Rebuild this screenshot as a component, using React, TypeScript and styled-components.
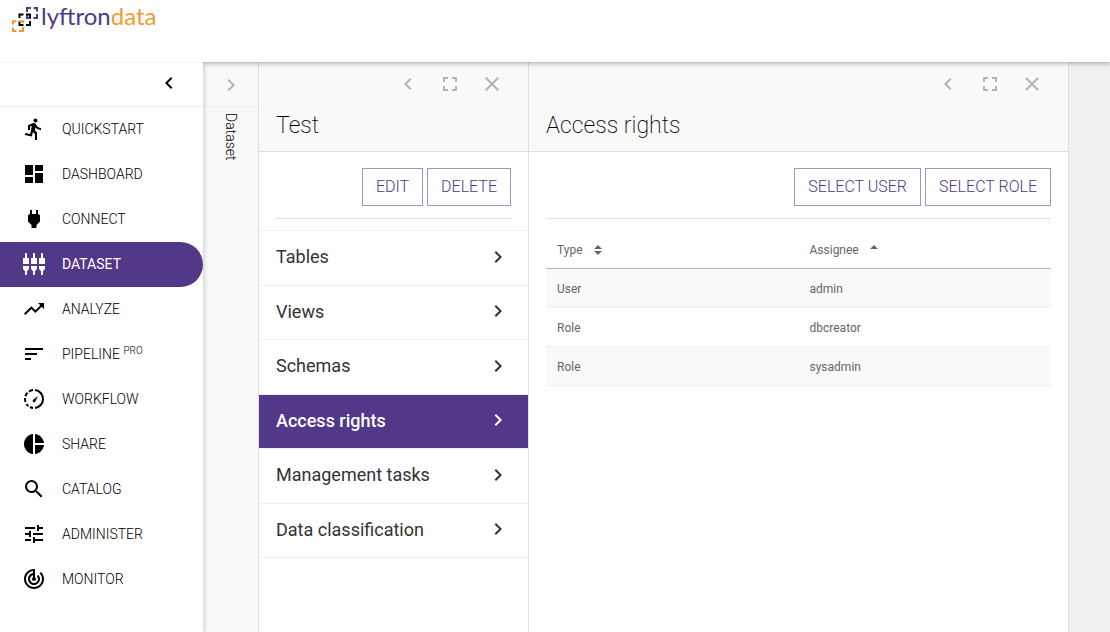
import React from "react";
import styled, { createGlobalStyle } from "styled-components";
import {
  MdDirectionsRun,
  MdDashboard,
  MdPower,
  MdSettingsInputComponent,
  MdTrendingUp,
  MdSort,
  MdPieChart,
  MdSearch,
  MdTune,
  MdTrackChanges,
  MdChevronLeft,
  MdChevronRight,
  MdFullscreen,
  MdClose,
} from "react-icons/md";

const purple = "#513888";

const GlobalStyle = createGlobalStyle`
  *, *::before, *::after { box-sizing: border-box; }
  body {
    margin: 0;
    font-family: Roboto, "Liberation Sans", sans-serif;
    color: #000;
    background: #f0f0f0;
  }
  button { font-family: inherit; cursor: pointer; }
`;

const Page = styled.div`
  display: flex;
  flex-direction: column;
  min-height: 100vh;
`;

const Header = styled.header`
  height: 62px;
  padding: 4px 11px;
  background: #fff;
  position: relative;
  z-index: 1;
  box-shadow: 0 1px 5px rgba(0, 0, 0, 0.35);
`;

const Brand = styled.a`
  display: inline-flex;
  align-items: flex-start;
  gap: 2px;
  font-family: Lato, sans-serif;
  font-size: 24px;
  line-height: 24px;
  color: ${purple};
  text-decoration: none;
`;

const BrandMark = styled.svg`
  width: 28px;
  height: 28px;
  margin-top: 2px;
`;

const BrandAccent = styled.span`
  color: #f29a2e;
`;

const Body = styled.div`
  display: flex;
  flex: 1;
`;

const Sidebar = styled.nav`
  flex: none;
  width: 203px;
  background: #fff;
  position: relative;
  z-index: 2;
  box-shadow: 1px 0 5px rgba(0, 0, 0, 0.2);
  clip-path: inset(0 -8px 0 0);
`;

const SidebarTop = styled.div`
  display: flex;
  justify-content: flex-end;
  align-items: center;
  height: 45px;
  padding: 0 22px 3px 0;
  border-top: 1px solid #f6f6f6;
  border-bottom: 1px solid #f0f0f2;
`;

const IconButton = styled.button<{ $tone?: string }>`
  display: flex;
  padding: 0;
  border: 0;
  background: none;
  color: ${(p) => p.$tone ?? "#b3b3b7"};
  font-size: 24px;
`;

const NavList = styled.ul`
  list-style: none;
  margin: 0;
  padding: 0;
`;

const NavLink = styled.a<{ $active?: boolean }>`
  display: flex;
  align-items: center;
  gap: 16px;
  height: 45px;
  padding: 0 0 2px 22px;
  border-radius: 0 23px 23px 0;
  background: ${(p) => (p.$active ? purple : "transparent")};
  color: ${(p) => (p.$active ? "#fff" : "#000")};
  font-size: 14px;
  font-weight: ${(p) => (p.$active ? 400 : 300)};
  text-decoration: none;

  svg {
    width: 24px;
    height: 24px;
    flex: none;
  }
  sup {
    font-size: 10px;
    line-height: 0;
    vertical-align: 5px;
  }
`;

const CollapsedPanel = styled.aside`
  flex: none;
  display: flex;
  flex-direction: column;
  align-items: center;
  width: 56px;
  background: #f9f9f9;
  border-right: 1px solid #dfdfe0;
`;

const CollapsedTop = styled.div`
  display: flex;
  justify-content: center;
  align-items: center;
  align-self: stretch;
  height: 45px;
  padding-top: 2px;
  border-bottom: 1px solid #f0f0f0;
`;

const VerticalTitle = styled.h2`
  margin: 6px 0 0;
  writing-mode: vertical-rl;
  font-size: 14px;
  font-weight: 300;
  line-height: 16px;
`;

const Panel = styled.section<{ $basis: number }>`
  flex: 0 1 ${(p) => p.$basis}px;
  min-width: 0;
  background: #fff;
  border-right: 1px solid #dfdfe0;
`;

const PanelHeader = styled.div`
  height: 90px;
  padding: 10px 17px 0;
  background: #f9f9f9;
  border-bottom: 1px solid #dfdfe0;
`;

const PanelControls = styled.div`
  display: flex;
  justify-content: flex-end;
  gap: 18px;
  padding-right: 7px;
  font-size: 24px;
`;

const PanelTitle = styled.h1`
  margin: 16px 0 0;
  font-size: 23px;
  font-weight: 200;
  line-height: 28px;
`;

const Toolbar = styled.div`
  display: flex;
  justify-content: flex-end;
  gap: 4px;
  margin: 0 17px 11px;
  padding: 16px 0 12px;
  border-bottom: 1px solid #dfdfe0;
`;

const OutlineButton = styled.button`
  height: 38px;
  padding: 0 13px 2px;
  border: 1px solid #a096c4;
  background: #fff;
  color: ${purple};
  font-size: 16px;
  font-weight: 300;
  white-space: nowrap;
`;

const Menu = styled.ul`
  display: grid;
  grid-auto-rows: 1fr;
  min-height: 328px;
  margin: 0;
  padding: 0;
  list-style: none;
  border-top: 1px solid #f0f0f0;
`;

const MenuLink = styled.a<{ $active?: boolean }>`
  display: flex;
  justify-content: space-between;
  align-items: center;
  height: 100%;
  padding: 0 18px 2px 17px;
  border-bottom: 1px solid #f0f0f0;
  background: ${(p) => (p.$active ? purple : "#fff")};
  color: ${(p) => (p.$active ? "#fff" : "#333")};
  font-size: 18px;
  font-weight: ${(p) => (p.$active ? 500 : 400)};
  text-decoration: none;

  svg {
    flex: none;
    font-size: 24px;
  }
`;

const TableWrap = styled.div`
  padding: 0 17px;
`;

const DataTable = styled.table`
  width: 100%;
  table-layout: fixed;
  border-collapse: separate;
  border-spacing: 0;
  color: #666;
  font-size: 12px;

  th,
  td {
    height: 39px;
    padding: 2px 11px 0;
    text-align: left;
    font-weight: 400;
  }
  th {
    border-bottom: 1px solid #b9add6;
  }
  td {
    border-bottom: 1px solid #f0f0f0;
  }
  tbody tr:nth-child(odd) {
    background: #f9f9f9;
  }
`;

const SortButton = styled.button`
  display: flex;
  align-items: center;
  gap: 11px;
  padding: 0;
  border: 0;
  background: none;
  color: inherit;
  font-size: inherit;
`;

const LogoMark = () => (
  <BrandMark viewBox="0 0 28 28" fill="none" strokeWidth="2" aria-hidden="true">
    <path stroke={purple} d="M16 6V2H20M22.5 2H26V5.5M26 8V12H22.5M16 8V12H20" />
    <path stroke="#000" d="M8.5 12V8.6H12.5M15 8.6H19V12M19 15V19H15M12.5 19H8.5V15" />
    <path stroke="#f29a2e" d="M2 18.5V15.2H5.5M8 15.2H12V17M12 21V25H8M5.5 25H2V21.5" />
  </BrandMark>
);

/* Gauge with a dashed left rim and a small needle */
const WorkflowIcon = () => (
  <svg viewBox="0 0 24 24" fill="none" stroke="currentColor" strokeWidth="2">
    <path d="M13 3.05A9 9 0 0 1 13 20.95" />
    <path d="M11 3.05A9 9 0 0 0 7 4.5M5.5 5.8A9 9 0 0 0 3.4 9.2M3.05 11A9 9 0 0 0 3.5 15M4.5 17A9 9 0 0 0 6.4 19.1M8 20A9 9 0 0 0 11 20.95" />
    <path fill="currentColor" stroke="none" d="M16 9 13.7 13.8A1.5 1.5 0 1 1 11.4 12.4Z" />
  </svg>
);

const SortIcon = ({ both }: { both?: boolean }) => (
  <svg width="8" height="10" viewBox="0 0 8 10" fill="currentColor" aria-hidden="true">
    <path d="M4 0 8 4H0Z" />
    {both && <path d="M0 6H8L4 10Z" />}
  </svg>
);

const navItems: { label: string; icon: React.ReactNode; tag?: string; active?: boolean }[] = [
  { label: "QUICKSTART", icon: <MdDirectionsRun /> },
  { label: "DASHBOARD", icon: <MdDashboard /> },
  { label: "CONNECT", icon: <MdPower /> },
  { label: "DATASET", icon: <MdSettingsInputComponent />, active: true },
  { label: "ANALYZE", icon: <MdTrendingUp /> },
  { label: "PIPELINE", icon: <MdSort />, tag: "PRO" },
  { label: "WORKFLOW", icon: <WorkflowIcon /> },
  { label: "SHARE", icon: <MdPieChart /> },
  { label: "CATALOG", icon: <MdSearch /> },
  { label: "ADMINISTER", icon: <MdTune /> },
  { label: "MONITOR", icon: <MdTrackChanges /> },
];

const menuItems = ["Tables", "Views", "Schemas", "Access rights", "Management tasks", "Data classification"];

const grants = [
  { type: "User", assignee: "admin" },
  { type: "Role", assignee: "dbcreator" },
  { type: "Role", assignee: "sysadmin" },
];

const Controls = () => (
  <PanelControls>
    <IconButton aria-label="Collapse panel"><MdChevronLeft /></IconButton>
    <IconButton aria-label="Full screen"><MdFullscreen /></IconButton>
    <IconButton aria-label="Close panel"><MdClose /></IconButton>
  </PanelControls>
);

export default function App() {
  return (
    <Page>
      <GlobalStyle />
      <Header>
        <Brand href="#">
          <LogoMark />
          <span>lyftron<BrandAccent>data</BrandAccent></span>
        </Brand>
      </Header>
      <Body>
        <Sidebar>
          <SidebarTop>
            <IconButton $tone="#000" aria-label="Collapse menu"><MdChevronLeft /></IconButton>
          </SidebarTop>
          <NavList>
            {navItems.map((item) => (
              <li key={item.label}>
                <NavLink href="#" $active={item.active}>
                  {item.icon}
                  <span>{item.label}{item.tag && <> <sup>{item.tag}</sup></>}</span>
                </NavLink>
              </li>
            ))}
          </NavList>
        </Sidebar>
        <CollapsedPanel>
          <CollapsedTop>
            <IconButton aria-label="Expand dataset"><MdChevronRight /></IconButton>
          </CollapsedTop>
          <VerticalTitle>Dataset</VerticalTitle>
        </CollapsedPanel>
        <Panel $basis={270}>
          <PanelHeader>
            <Controls />
            <PanelTitle>Test</PanelTitle>
          </PanelHeader>
          <Toolbar>
            <OutlineButton>EDIT</OutlineButton>
            <OutlineButton>DELETE</OutlineButton>
          </Toolbar>
          <Menu>
            {menuItems.map((label) => (
              <li key={label}>
                <MenuLink href="#" $active={label === "Access rights"}>
                  {label}
                  <MdChevronRight />
                </MenuLink>
              </li>
            ))}
          </Menu>
        </Panel>
        <Panel $basis={540}>
          <PanelHeader>
            <Controls />
            <PanelTitle>Access rights</PanelTitle>
          </PanelHeader>
          <Toolbar>
            <OutlineButton>SELECT USER</OutlineButton>
            <OutlineButton>SELECT ROLE</OutlineButton>
          </Toolbar>
          <TableWrap>
            <DataTable>
              <thead>
                <tr>
                  <th scope="col"><SortButton>Type<SortIcon both /></SortButton></th>
                  <th scope="col" aria-sort="ascending"><SortButton>Assignee<SortIcon /></SortButton></th>
                </tr>
              </thead>
              <tbody>
                {grants.map((g) => (
                  <tr key={g.assignee}>
                    <td>{g.type}</td>
                    <td>{g.assignee}</td>
                  </tr>
                ))}
              </tbody>
            </DataTable>
          </TableWrap>
        </Panel>
      </Body>
    </Page>
  );
}
